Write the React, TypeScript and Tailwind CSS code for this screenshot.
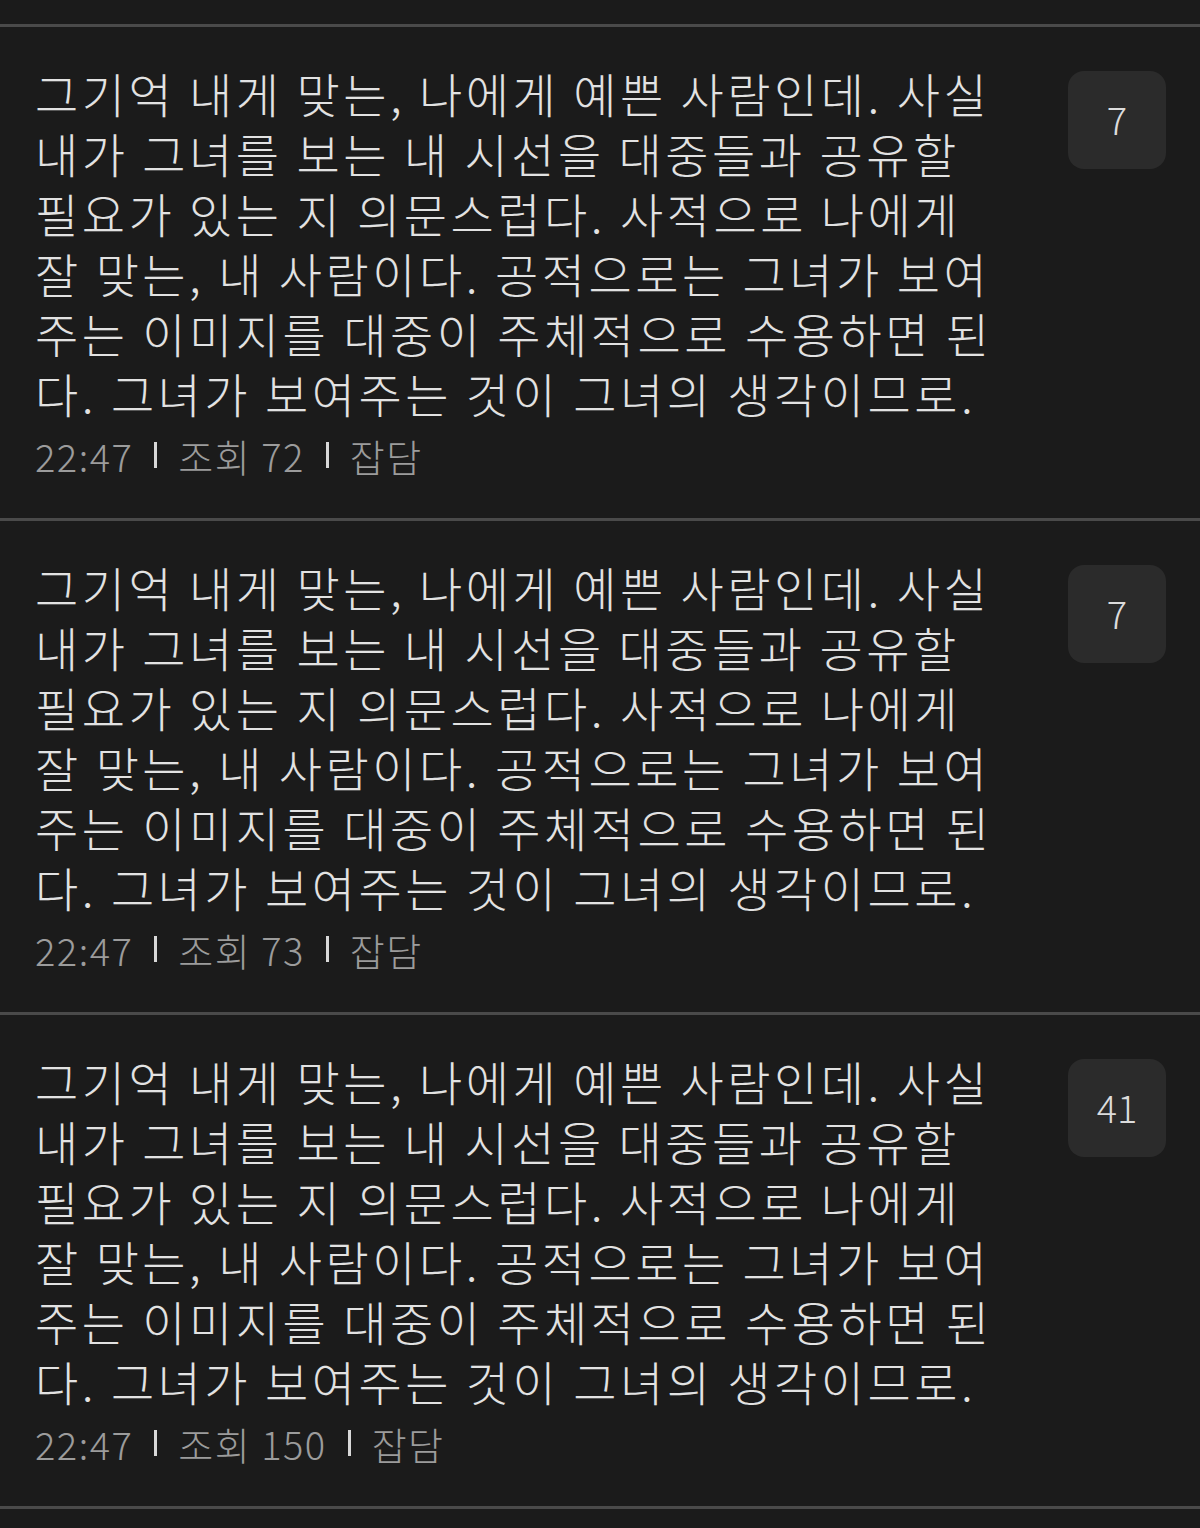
import React from 'react';

const lines = [
    '그기억 내게 맞는, 나에게 예쁜 사람인데. 사실',
    '내가 그녀를 보는 내 시선을 대중들과 공유할',
    '필요가 있는 지 의문스럽다. 사적으로 나에게',
    '잘 맞는, 내 사람이다. 공적으로는 그녀가 보여',
    '주는 이미지를 대중이 주체적으로 수용하면 된',
    '다. 그녀가 보여주는 것이 그녀의 생각이므로.',
];

const posts = [
    { id: 1, time: '22:47', views: 72, category: '잡담', comments: 7 },
    { id: 2, time: '22:47', views: 73, category: '잡담', comments: 7 },
    { id: 3, time: '22:47', views: 150, category: '잡담', comments: 41 },
];

const Divider: React.FC = () => <span className="inline-block w-[3px] h-[26px] bg-[#d8d8d8] mx-[21px]"></span>;

export default function App() {
    return (
        <div
            className="w-[1200px] h-[1528px] bg-[#1b1b1b] overflow-hidden"
            style={{ fontFamily: '"Noto Sans CJK KR", "Noto Sans", sans-serif' }}
        >
            <div className="h-[24px]"></div>
            {posts.map((post) => (
                <div key={post.id} className="border-t-[3px] border-[#4a4a4a] h-[494px] pl-[35px] pr-[34px] pt-[36px] flex justify-between">
                    <div className="flex flex-col">
                        <p className="text-[47px] leading-[60px] tracking-[3.5px] font-light text-[#e2e2e2] whitespace-nowrap">
                            {lines.map((l, i) => (
                                <React.Fragment key={i}>
                                    {l}
                                    {i < lines.length - 1 && <br />}
                                </React.Fragment>
                            ))}
                        </p>
                        <div className="mt-[5px] h-[54px] flex items-center text-[38px] tracking-[1.5px] font-light text-[#9c9c9c]">
                            <span>{post.time}</span>
                            <Divider />
                            <span>조회 {post.views}</span>
                            <Divider />
                            <span>{post.category}</span>
                        </div>
                    </div>
                    <div className="mt-[8px] w-[98px] h-[98px] rounded-[16px] bg-[#2b2b2b] flex items-center justify-center pb-[3px] text-[38px] font-light text-[#dcdcdc]">
                        {post.comments}
                    </div>
                </div>
            ))}
            <div className="border-t-[3px] border-[#4a4a4a]"></div>
        </div>
    );
}
